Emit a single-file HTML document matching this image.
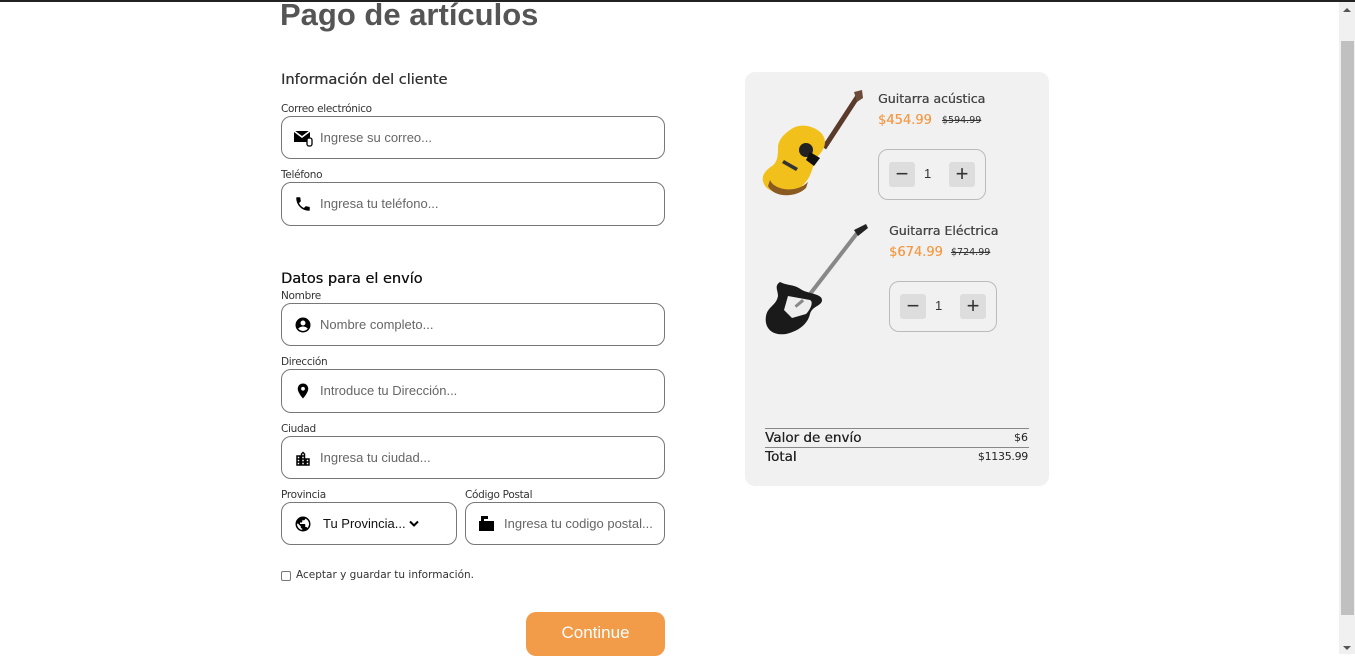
<!DOCTYPE html>
<html><head><meta charset="utf-8"><style>
*{margin:0;padding:0;box-sizing:border-box}
body{width:1355px;height:654px;overflow:hidden;background:#fff;font-family:"Liberation Sans",sans-serif;position:relative;color:#333}
.a{position:absolute;white-space:nowrap}
.h{font-family:"DejaVu Sans","Liberation Sans",sans-serif}
.lbl{position:absolute;font-size:10.5px;color:#333;font-family:"DejaVu Sans",sans-serif;letter-spacing:-0.3px}
.inp{position:absolute;border:1px solid #777;border-radius:10px;background:#fff}
.ph{position:absolute;left:38px;top:13px;font-size:13px;color:#666;white-space:nowrap;font-family:"Liberation Sans",sans-serif}
.ic{position:absolute;left:12px;top:12px}
.qty{position:absolute;width:108px;height:51px;border:1px solid #bbb;border-radius:10px}
.qb{position:absolute;top:12px;width:26px;height:25px;background:#ddd;border-radius:3px;font-size:22px;line-height:24px;text-align:center;color:#333}
.sb{text-shadow:0.3px 0 0 currentColor}
</style></head><body>
<div class="a" style="left:0;top:0;width:1355px;height:2px;background:#222"></div>
<div class="a" style="left:1339px;top:2px;width:16px;height:652px;background:#f0f0f0"></div>
<div class="a" style="left:1341px;top:41px;width:13px;height:574px;background:#c0c0c0"></div>
<div class="a" style="left:1343px;top:8px;width:0;height:0;border-left:4px solid transparent;border-right:4px solid transparent;border-bottom:4px solid #555"></div>
<div class="a" style="left:1343px;top:646px;width:0;height:0;border-left:4px solid transparent;border-right:4px solid transparent;border-top:4px solid #555"></div>

<div class="a" style="left:280px;top:-3px;font-size:31px;font-weight:bold;color:#555;font-family:'Liberation Sans',sans-serif">Pago de artículos</div>
<div class="a h sb" style="left:281px;top:72px;font-size:14.5px;color:#333">Información del cliente</div>
<div class="lbl" style="left:281px;top:103px">Correo electrónico</div>
<div class="inp" style="left:281px;top:116px;width:384px;height:43px"><svg class="ic" width="20" height="18" viewBox="0 0 20 18"><rect x="0" y="2" width="16" height="11" fill="#000"/><path d="M0 2l8 6 8-6" stroke="#fff" stroke-width="1.5" fill="none"/><rect x="13" y="9" width="5" height="8" rx="2" fill="#fff" stroke="#000" stroke-width="1.3"/></svg><span class="ph">Ingrese su correo...</span></div>
<div class="lbl" style="left:281px;top:169px">Teléfono</div>
<div class="inp" style="left:281px;top:182px;width:384px;height:44px"><svg class="ic" width="18" height="18" viewBox="0 0 24 24"><path d="M6.6 10.8c1.4 2.8 3.8 5.1 6.6 6.6l2.2-2.2c.3-.3.7-.4 1-.2 1.1.4 2.3.6 3.6.6.6 0 1 .4 1 1V20c0 .6-.4 1-1 1C10.6 21 3 13.4 3 4c0-.6.4-1 1-1h3.5c.6 0 1 .4 1 1 0 1.3.2 2.5.6 3.6.1.3 0 .7-.2 1z"/></svg><span class="ph">Ingresa tu teléfono...</span></div>

<div class="a h sb" style="left:281px;top:271px;font-size:14.5px;color:#111">Datos para el envío</div>
<div class="lbl" style="left:281px;top:290px">Nombre</div>
<div class="inp" style="left:281px;top:303px;width:384px;height:43px"><svg class="ic" width="18" height="18" viewBox="0 0 24 24"><path d="M12 2a10 10 0 100 20 10 10 0 000-20zm0 4a3.3 3.3 0 110 6.6A3.3 3.3 0 0112 6zm0 14c-2.7 0-5-1.3-6.4-3.3C7.4 14.8 10 14 12 14s4.6.8 6.4 2.7C17 18.7 14.7 20 12 20z"/></svg><span class="ph">Nombre completo...</span></div>
<div class="lbl" style="left:281px;top:356px">Dirección</div>
<div class="inp" style="left:281px;top:369px;width:384px;height:44px"><svg class="ic" width="18" height="18" viewBox="0 0 24 24"><path d="M12 2C8.1 2 5 5.1 5 9c0 5.2 7 13 7 13s7-7.8 7-13c0-3.900-3.1-7-7-7zm0 9.5a2.5 2.5 0 110-5 2.5 2.5 0 010 5z"/></svg><span class="ph">Introduce tu Dirección...</span></div>
<div class="lbl" style="left:281px;top:423px">Ciudad</div>
<div class="inp" style="left:281px;top:436px;width:384px;height:43px"><svg class="ic" width="18" height="18" viewBox="0 0 24 24" style="top:13px"><path d="M15 11V5l-3-3-3 3v2H3v14h18V11h-6zm-8 8H5v-2h2v2zm0-4H5v-2h2v2zm0-4H5V9h2v2zm6 8h-2v-2h2v2zm0-4h-2v-2h2v2zm0-4h-2V9h2v2zm0-4h-2V5h2v2zm6 12h-2v-2h2v2zm0-4h-2v-2h2v2z"/></svg><span class="ph">Ingresa tu ciudad...</span></div>
<div class="lbl" style="left:281px;top:489px">Provincia</div>
<div class="inp" style="left:281px;top:502px;width:176px;height:43px"><svg class="ic" width="18" height="18" viewBox="0 0 24 24"><path d="M12 2a10 10 0 100 20 10 10 0 000-20zm-1 17.9A8 8 0 014 12l1-.9 4 4v1c0 1.1.9 2 2 2v1.9zm6.9-2.5c-.3-.8-1-1.4-1.9-1.4h-1v-3c0-.6-.4-1-1-1H8v-2h2c.6 0 1-.4 1-1V7h2c1.1 0 2-.9 2-2v-.4a8 8 0 012.9 12.8z"/></svg><span class="ph" style="left:41px;color:#111">Tu Provincia...</span><svg class="a" style="left:127px;top:17px" width="10" height="8" viewBox="0 0 10 8"><path d="M1 1.5l4 4 4-4" stroke="#000" stroke-width="2" fill="none"/></svg></div>
<div class="lbl" style="left:465px;top:489px">Código Postal</div>
<div class="inp" style="left:465px;top:502px;width:200px;height:43px"><svg class="ic" width="18" height="18" viewBox="0 0 18 18" style="top:11px"><rect x="1" y="7" width="15" height="10" fill="#000"/><rect x="3" y="2" width="3" height="6" fill="#000"/><rect x="3" y="2" width="7" height="3" fill="#000"/></svg><span class="ph">Ingresa tu codigo postal...</span></div>

<div class="a" style="left:281px;top:571px;width:10px;height:10px;border:1px solid #777;border-radius:2px"></div>
<div class="a h" style="left:296px;top:569px;font-size:10.5px;color:#333">Aceptar y guardar tu información.</div>
<div class="a" style="left:526px;top:612px;width:139px;height:44px;background:#f29b48;border-radius:10px;color:#fff;font-size:17px;text-align:center;line-height:42px">Continue</div>

<div class="a" style="left:745px;top:72px;width:304px;height:414px;background:#f1f1f1;border-radius:10px"></div>
<svg class="a" style="left:760px;top:88px" width="105" height="115" viewBox="0 0 105 115">
<path d="M64 60 L98 8" stroke="#5a3a2a" stroke-width="5"/><path d="M94 4l8-2 1 8-6 4z" fill="#6b4a3a"/>
<path d="M30 42c10-8 25-4 32 4 6 8 2 16-4 22-6 6-4 18-14 28-12 14-36 10-40 0-4-8 2-14 8-18 6-4 6-12 6-18 0-8 6-14 12-18z" fill="#f2c01a"/>
<path d="M10 92c4 10 26 14 38 2l-2 6c-10 10-32 10-38-2z" fill="#8a5a20"/>
<circle cx="46" cy="62" r="7" fill="#222"/><path d="M50 64l10 6-6 8-8-6z" fill="#111"/><path d="M24 72l14 8-2 3-14-8z" fill="#333"/>
</svg>
<div class="a h sb" style="left:878px;top:91px;font-size:12.5px;color:#444">Guitarra acústica</div>
<div class="a h sb" style="left:878px;top:113px;font-size:13px;color:#f29b48">$454.99</div>
<div class="a h" style="left:942px;top:115px;font-size:9.5px;color:#333;text-decoration:line-through">$594.99</div>
<div class="qty" style="left:878px;top:149px"><div class="qb" style="left:10px">−</div><div class="a" style="left:45px;top:16px;font-size:13px">1</div><div class="qb" style="left:70px">+</div></div>

<svg class="a" style="left:760px;top:222px" width="115" height="115" viewBox="0 0 115 115">
<path d="M40 85 L98 10" stroke="#888" stroke-width="4"/><path d="M94 8l12-6 2 4-10 8z" fill="#222"/>
<path d="M20 60c8 4 14 2 22 8 8 4 20 4 20 10s-10 6-12 14c-2 8-8 16-24 20-14 2-22-6-20-18 2-10 10-10 12-20 0-6-4-10 2-14z" fill="#1a1a1a"/>
<path d="M28 74l22 4c4 2 0 10-4 14l-14 4-8-8z" fill="#eee"/><rect x="34" y="80" width="10" height="3" fill="#888" transform="rotate(-40 39 81)"/>
</svg>
<div class="a h sb" style="left:889px;top:223px;font-size:12.5px;color:#444">Guitarra Eléctrica</div>
<div class="a h sb" style="left:889px;top:245px;font-size:13px;color:#f29b48">$674.99</div>
<div class="a h" style="left:951px;top:247px;font-size:9.5px;color:#333;text-decoration:line-through">$724.99</div>
<div class="qty" style="left:889px;top:281px"><div class="qb" style="left:10px">−</div><div class="a" style="left:45px;top:16px;font-size:13px">1</div><div class="qb" style="left:70px">+</div></div>

<div class="a" style="left:765px;top:428px;width:264px;height:1px;background:#888"></div>
<div class="a h sb" style="left:765px;top:430px;font-size:13.5px;color:#222">Valor de envío</div>
<div class="a h" style="left:1000px;top:431px;width:28px;text-align:right;font-size:11px;color:#222">$6</div>
<div class="a" style="left:765px;top:447px;width:264px;height:1px;background:#888"></div>
<div class="a h sb" style="left:765px;top:449px;font-size:13.5px;color:#222">Total</div>
<div class="a h" style="left:960px;top:450px;width:68px;text-align:right;font-size:11px;color:#222;letter-spacing:-0.3px">$1135.99</div>
</body></html>
